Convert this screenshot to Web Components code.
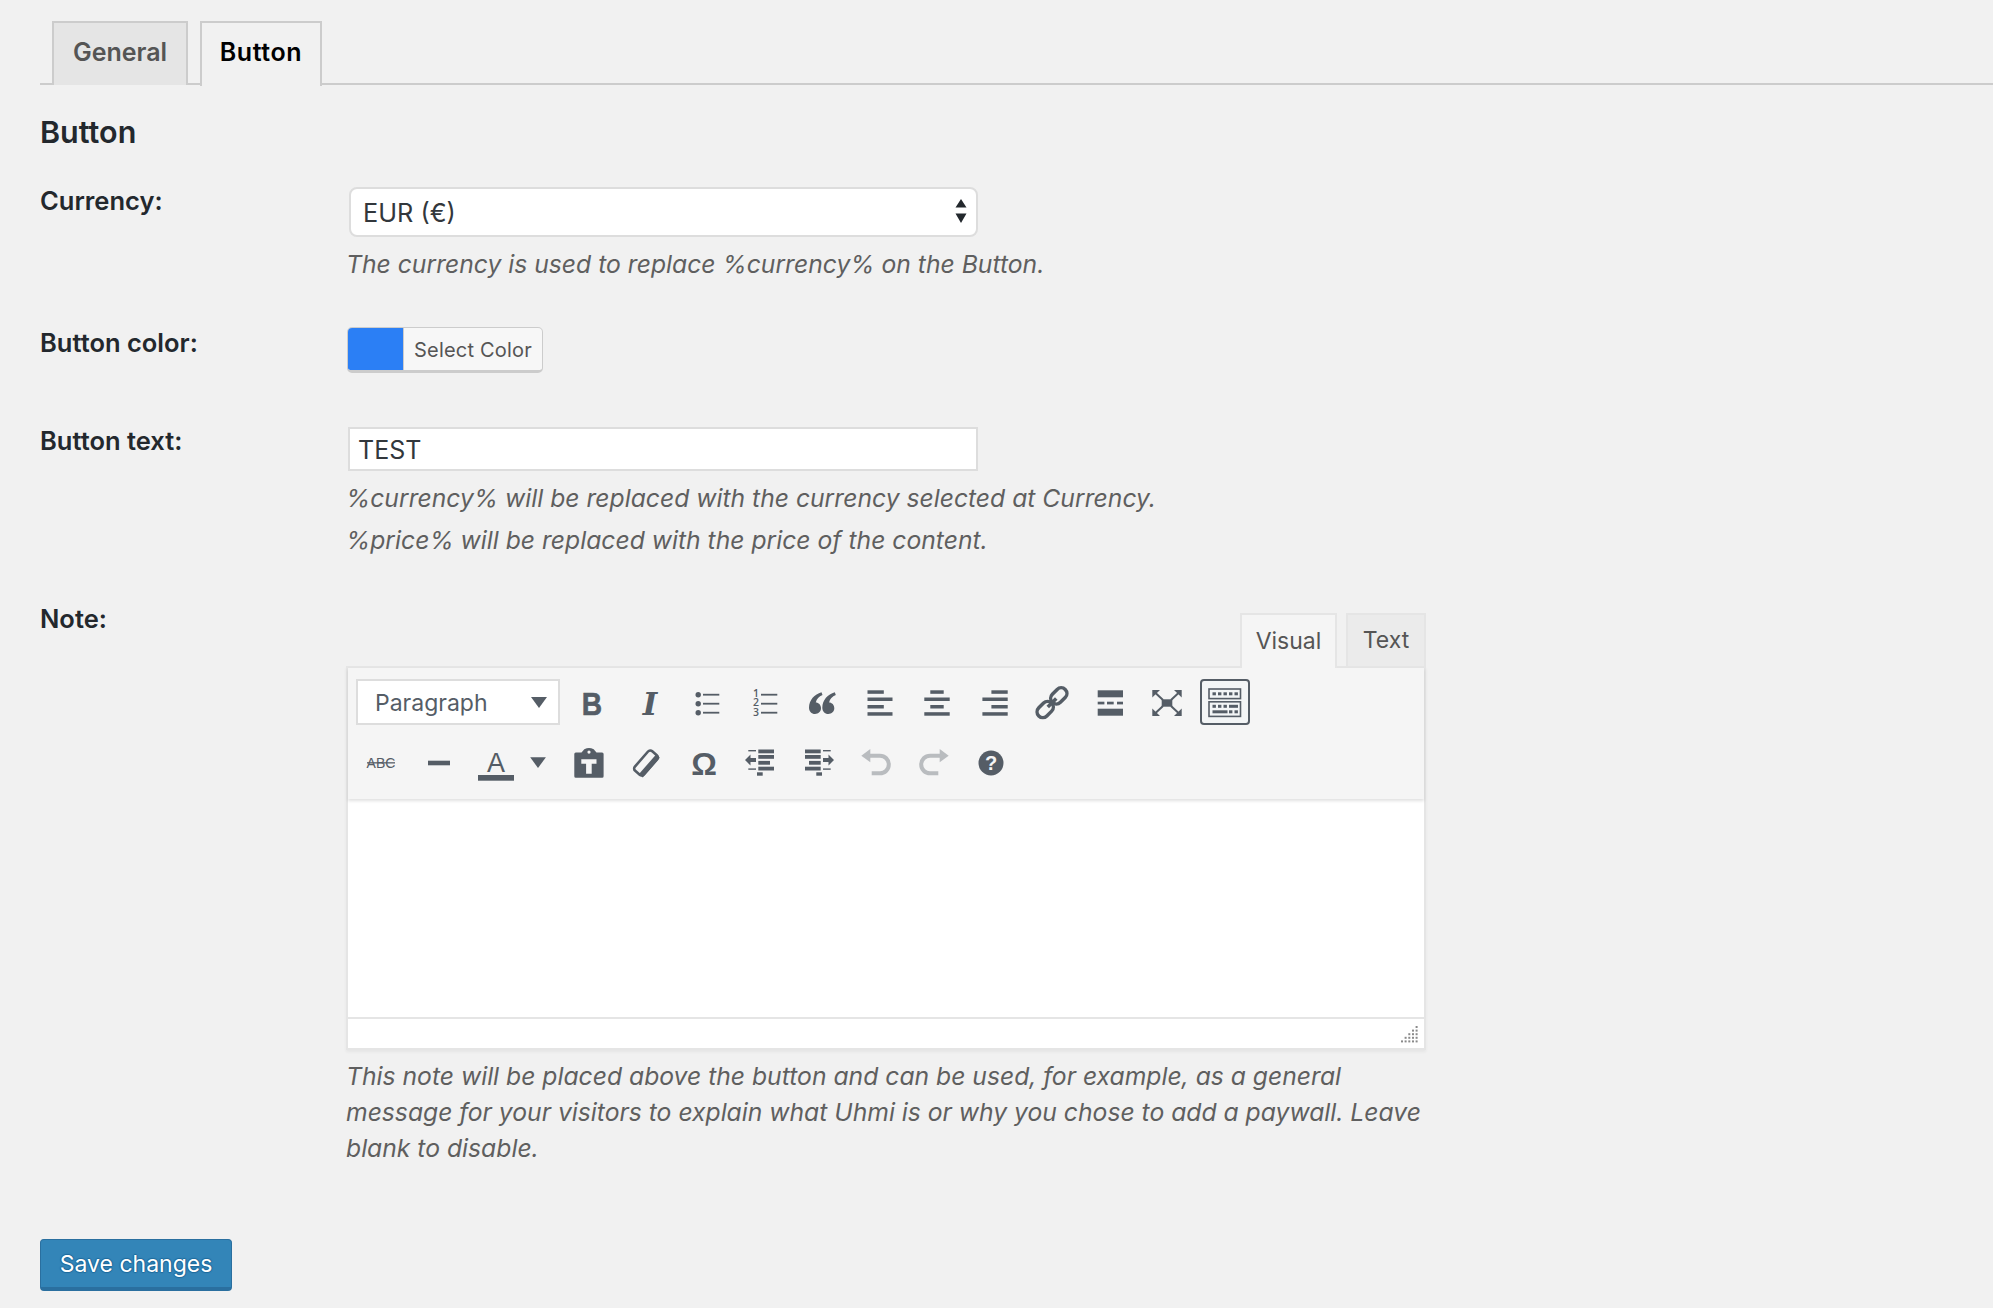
<!DOCTYPE html>
<html lang="en">
<head>
<meta charset="utf-8">
<title>Settings</title>
<style>
  html, body { margin: 0; padding: 0; background: #f1f1f1; }
  body { font: 24.7px/1.3 Inter, "Liberation Sans", sans-serif; color: #23282d; }
</style>
</head>
<body>
<settings-page>
  <nav-tabs>
    <nav-tab style="--w:136px">General</nav-tab>
    <nav-tab style="--w:122px" active>Button</nav-tab>
  </nav-tabs>
  <section-title>Button</section-title>

  <form-row style="--top:36px;--label-top:-1.5px">
    <span slot="label">Currency:</span>
    <select-box>EUR (€)</select-box>
    <field-desc style="--mt:12px">The currency is used to replace %currency% on the Button.</field-desc>
  </form-row>

  <form-row style="--top:48px;--label-top:1px">
    <span slot="label">Button color:</span>
    <color-button label="Select Color" value="#2b7ff5"></color-button>
  </form-row>

  <form-row style="--top:54px;--label-top:-1px">
    <span slot="label">Button text:</span>
    <text-field>TEST</text-field>
    <field-desc style="--mt:12px">%currency% will be replaced with the currency selected at Currency.</field-desc>
    <field-desc style="--mt:12px">%price% will be replaced with the price of the content.</field-desc>
  </form-row>

  <form-row style="--top:58px;--label-top:-9px">
    <span slot="label">Note:</span>
    <mce-editor></mce-editor>
    <field-desc style="--mt:8px;--lh:36px">This note will be placed above the button and can be used, for example, as a general<br>message for your visitors to explain what Uhmi is or why you chose to add a paywall. Leave<br>blank to disable.</field-desc>
  </form-row>

  <save-button>Save changes</save-button>
</settings-page>

<script>
"use strict"
const TXT = 'fill="currentColor" text-anchor="middle"';
const OUTDENT = `
  <rect x="4.3" y="4" width="7.7" height="1.4"/><rect x="14.3" y="3.5" width="15.7" height="3.8"/>
  <rect x="14.3" y="9" width="15.7" height="3.8"/><rect x="14.3" y="14.9" width="11.7" height="3.8"/>
  <rect x="14.3" y="20.7" width="15.7" height="3.8"/><rect x="4.3" y="22.4" width="7.7" height="1.4"/>
  <rect x="13" y="26.3" width="5.7" height="3.4"/>
  <path d="M1 14l5.5-5.500V12H12v4H6.500v3.500z"/>`;
const ICONS = {
  bold: `<g transform="translate(17 0) scale(.88 1)"><text x="0" y="28.5" ${TXT} font-family="Liberation Sans" font-weight="700" font-size="32" stroke="currentColor" stroke-width=".6">B</text></g>`,
  italic: `<text x="17" y="28.5" ${TXT} font-family="DejaVu Serif" font-style="italic" font-weight="700" font-size="31">I</text>`,
  ul: `<circle cx="8.2" cy="8.7" r="2.7"/><circle cx="8.2" cy="17.7" r="2.7"/><circle cx="8.2" cy="26.7" r="2.7"/>
       <rect x="13" y="7.8" width="16.3" height="1.8"/><rect x="13" y="16.8" width="16.3" height="1.8"/><rect x="13" y="25.8" width="16.3" height="1.8"/>`,
  ol: `<foreignObject x="3" y="3" width="10" height="30"><div xmlns="http://www.w3.org/1999/xhtml" style="font:600 10.5px/9.4px 'Open Sans',sans-serif;white-space:pre;text-align:center;color:#555d66">1
2
3</div></foreignObject>
       <rect x="13" y="7.8" width="16.3" height="1.8"/><rect x="13" y="16.8" width="16.3" height="1.8"/><rect x="13" y="25.8" width="16.3" height="1.8"/>`,
  quote: `<path d="M16.5 6.3C9.5 8.5 4 14 4 21.5 4 25.5 6.6 28 10 28c3.4 0 6-2.5 6-5.7 0-3.3-2.4-5.7-5.2-5.7.7-3.6 3.2-6.1 6.7-7.6z"/>
          <path d="M29.8 6.3C22.8 8.5 17.3 14 17.3 21.5c0 4 2.6 6.5 6 6.5 3.4 0 6-2.5 6-5.7 0-3.3-2.4-5.7-5.2-5.7.7-3.6 3.2-6.1 6.7-7.6z"/>`,
  alignleft: `<rect x="4.5" y="4.3" width="16.3" height="3.5"/><rect x="4.5" y="11.5" width="25" height="3.5"/><rect x="4.5" y="19" width="16.3" height="3.5"/><rect x="4.5" y="26.2" width="25" height="3.5"/>`,
  aligncenter: `<rect x="10.3" y="4.3" width="13.4" height="3.5"/><rect x="4.3" y="11.5" width="25.4" height="3.5"/><rect x="10.3" y="19" width="13.4" height="3.5"/><rect x="4.3" y="26.2" width="25.4" height="3.5"/>`,
  alignright: `<rect x="13.4" y="4.3" width="16.3" height="3.5"/><rect x="4.4" y="11.5" width="25.3" height="3.5"/><rect x="13.4" y="19" width="16.3" height="3.5"/><rect x="4.4" y="26.2" width="25.3" height="3.5"/>`,
  link: `<g transform="rotate(-45 17 16.7)" fill="none" stroke="currentColor" stroke-width="3.5">
           <rect x="17.5" y="11" width="18.2" height="11.4" rx="5.7"/>
           <rect x="-1.7" y="11" width="18.2" height="11.4" rx="5.7"/>
           <path d="M11 16.7h12"/></g>`,
  more: `<rect x="4.7" y="4.3" width="25.3" height="7"/><rect x="4.7" y="22.7" width="25.3" height="7"/>
         <rect x="4.7" y="15.7" width="6.7" height="2.7"/><rect x="14" y="15.7" width="6.7" height="2.7"/><rect x="24" y="15.7" width="6" height="2.7"/>`,
  fullscreen: `<rect x="11.7" y="13.3" width="10.6" height="7.4"/>
    <path d="M2.3 4h7.7L2.3 11.5zM31.7 4H24l7.7 7.5zM2.3 30H10L2.3 22.5zM31.7 30H24l7.7-7.5z"/>
    <path d="M5 6.5l8 7.5M29 6.5L21 14M5 27.5l8-7.5M29 27.5L21 20" stroke="currentColor" stroke-width="2" fill="none"/>`,
  kitchen: `<g fill="none" stroke="currentColor" stroke-width="1.6"><rect x="1" y="3" width="31.5" height="9.6"/><rect x="1" y="15.8" width="31.5" height="14.6"/></g>
    <rect x="4.5" y="6.3" width="3.4" height="3"/><rect x="10" y="6.3" width="3.4" height="3"/><rect x="15.5" y="6.3" width="3.4" height="3"/><rect x="21" y="6.3" width="3.4" height="3"/><rect x="26.5" y="6.3" width="3.4" height="3"/>
    <rect x="4.5" y="18.8" width="3.4" height="3"/><rect x="10" y="18.8" width="3.4" height="3"/><rect x="15.5" y="18.8" width="3.4" height="3"/><rect x="21" y="18.8" width="9" height="3"/>
    <rect x="4.5" y="24.3" width="15" height="3"/><rect x="21" y="24.3" width="3.4" height="3"/><rect x="26.5" y="24.3" width="3.4" height="3"/>`,
  strike: `<text x="17" y="22.3" ${TXT} font-family="Liberation Sans" font-size="14">ABC</text><rect x="3" y="16.2" width="28" height="1.3"/>`,
  hr: `<rect x="6" y="14.7" width="22" height="4.6"/>`,
  textcolor: `<text x="17" y="26.3" ${TXT} font-family="Liberation Sans" font-size="27">A</text><rect x="-1" y="29" width="36" height="5.7"/>`,
  caret: `<path d="M9.2 11.3h15.7L17 22z"/>`,
  paste: `<path fill-rule="evenodd" d="M3.8 6.5H9.5L12.3 3.3Q14.8 2 17 2T21.7 3.3L24.5 6.5H30.1Q31.6 6.5 31.6 8V30.2Q31.6 31.7 30.1 31.7H3.8Q2.3 31.7 2.3 30.2V8Q2.3 6.5 3.8 6.5ZM9.3 13.3V17.7H14.1V27.7H19.7V17.7H24.5V13.3ZM17 4.5A1.6 1.6 0 1 0 17 7.7 1.6 1.6 0 1 0 17 4.5Z"/>`,
  eraser: `<g transform="rotate(-49 17 17)"><rect x="4" y="11" width="26" height="12" rx="3" fill="none" stroke="currentColor" stroke-width="2.6"/><path d="M4 19h26v5H4z"/></g>`,
  omega: `<text x="17" y="28.7" ${TXT} font-family="Liberation Sans" font-weight="700" font-size="32">Ω</text>`,
  outdent: OUTDENT,
  indent: `<g transform="matrix(-1 0 0 1 33 0)">${OUTDENT}</g>`,
  undo: `<path d="M2.3 9.7L11.3 3v13.3z"/><path d="M10 9.7H21a8.8 8.8 0 0 1 0 17.600H12.7" fill="none" stroke="currentColor" stroke-width="4"/>`,
  redo: `<path d="M31.7 9.7L22.7 3v13.3z"/><path d="M24 9.7H13a8.8 8.8 0 0 0 0 17.600H21.3" fill="none" stroke="currentColor" stroke-width="4"/>`,
  help: `<circle cx="17" cy="17" r="12.5"/><text x="17" y="24" fill="#f5f5f5" text-anchor="middle" font-family="Liberation Sans" font-weight="700" font-size="20">?</text>`
};

class SettingsPage extends HTMLElement {
    constructor() {
        super();
        this._root = this.attachShadow({ mode: "open" });
    }
    connectedCallback() {
        this._root.innerHTML = `
        <style>
            :host { display: block; padding: 21px 0 0 40px; }
        </style>
        <slot></slot>`;
    }
}
customElements.define("settings-page", SettingsPage);

class NavTabs extends HTMLElement {
    constructor() {
        super();
        this._root = this.attachShadow({ mode: "open" });
    }
    connectedCallback() {
        this._root.innerHTML = `
        <style>
            :host { display: flex; gap: 12px; padding-left: 12px; height: 64px; box-sizing: border-box; border-bottom: 2.5px solid #ccc; }
        </style>
        <slot></slot>`;
    }
}
customElements.define("nav-tabs", NavTabs);

class NavTab extends HTMLElement {
    constructor() {
        super();
        this._root = this.attachShadow({ mode: "open" });
    }
    connectedCallback() {
        this._root.innerHTML = `
        <style>
            :host { display: flex; align-items: center; justify-content: center; box-sizing: border-box; width: var(--w); height: 64px; padding-bottom: 4px;
                border: 2.5px solid #ccc; border-bottom: 0; background: #e5e5e5; color: #555;
                font-size: 25px; font-weight: 600; }
            :host([active]) { background: #f1f1f1; color: #000; height: 65px; padding-bottom: 5px; letter-spacing: .6px; }
        </style>
        <slot></slot>`;
    }
}
customElements.define("nav-tab", NavTab);

class SectionTitle extends HTMLElement {
    constructor() {
        super();
        this._root = this.attachShadow({ mode: "open" });
    }
    connectedCallback() {
        this._root.innerHTML = `
        <style>
            :host { display: block; margin-top: 28px; height: 38px; line-height: 38px; font-size: 30.5px; font-weight: 600; color: #23282d; }
        </style>
        <slot></slot>`;
    }
}
customElements.define("section-title", SectionTitle);

class FormRow extends HTMLElement {
    constructor() {
        super();
        this._root = this.attachShadow({ mode: "open" });
    }
    connectedCallback() {
        this._root.innerHTML = `
        <style>
            :host { display: grid; grid-template-columns: 308px 1fr; margin-top: var(--top, 0); }
            .label { font-size: 25.5px; font-weight: 600; line-height: 30px; margin-top: var(--label-top, 0); color: #23282d; }
            .field { display: flex; flex-direction: column; align-items: flex-start; min-width: 0; }
        </style>
        <div class="label"><slot name="label"></slot></div>
        <div class="field"><slot></slot></div>`;
    }
}
customElements.define("form-row", FormRow);

class SelectBox extends HTMLElement {
    constructor() {
        super();
        this._root = this.attachShadow({ mode: "open" });
    }
    connectedCallback() {
        this._root.innerHTML = `
        <style>
            :host { display: flex; align-items: center; justify-content: space-between; box-sizing: border-box; width: 629px; height: 50px;
                margin-left: 1px; padding: 2px 8px 0 12px; background: #fff; border: 2.5px solid #ddd; border-radius: 8px;
                font-size: 25.3px; color: #32373c; }
            svg { display: block; margin-top: -2px; }
        </style>
        <slot></slot>
        <svg width="14" height="26" viewBox="0 0 14 26" fill="#23282d"><path d="M7 0l5.5 8.500h-11zM1.500 14.500h11L7 24z"/></svg>`;
    }
}
customElements.define("select-box", SelectBox);

class FieldDesc extends HTMLElement {
    constructor() {
        super();
        this._root = this.attachShadow({ mode: "open" });
    }
    connectedCallback() {
        this._root.innerHTML = `
        <style>
            :host { display: block; margin-top: var(--mt, 0); margin-left: -2px; line-height: var(--lh, 30px); font-size: 24.7px; font-style: italic; color: #5f5f5f; white-space: nowrap; }
        </style>
        <slot></slot>`;
    }
}
customElements.define("field-desc", FieldDesc);

class ColorButton extends HTMLElement {
    constructor() {
        super();
        this._root = this.attachShadow({ mode: "open" });
    }
    connectedCallback() {
        this._root.innerHTML = `
        <style>
            :host { display: flex; box-sizing: border-box; width: 196px; height: 46px; margin-left: -1px; overflow: hidden;
                border: 1.5px solid #ccc; border-bottom-width: 3px; border-radius: 5px; background: #f7f7f7; color: #555; font-size: 20px; }
            .swatch { width: 55px; background: ${this.getAttribute("value")}; flex: none; }
            .text { flex: 1; display: flex; align-items: center; justify-content: center; border-left: 1.5px solid #ccc; letter-spacing: .2px; padding-top: 1px; }
        </style>
        <div class="swatch"></div>
        <div class="text">${this.getAttribute("label")}</div>`;
    }
}
customElements.define("color-button", ColorButton);

class TextField extends HTMLElement {
    constructor() {
        super();
        this._root = this.attachShadow({ mode: "open" });
    }
    connectedCallback() {
        this._root.innerHTML = `
        <style>
            :host { display: flex; align-items: center; box-sizing: border-box; width: 630px; height: 44px; padding: 2px 8px 0;
                background: #fff; border: 2.5px solid #ddd; font-size: 25px; color: #32373c; }
        </style>
        <slot></slot>`;
    }
}
customElements.define("text-field", TextField);

class MceBtn extends HTMLElement {
    constructor() {
        super();
        this._root = this.attachShadow({ mode: "open" });
    }
    connectedCallback() {
        const icon = this.getAttribute("icon");
        this._root.innerHTML = `
        <style>
            :host { display: flex; align-items: center; justify-content: center; flex: none; width: 57.5px; height: 46px; color: #555d66; }
            :host([off]) { color: #b9bcbf; }
            :host([pressed]) { width: 50px; margin-left: 4px; box-sizing: border-box; border: 2.5px solid #555d66; border-radius: 4px; background: #f3f5f6; }
            :host([split]) { width: 27px; margin-right: 8px; }
            svg { display: block; overflow: visible; fill: currentColor; flex: none; margin-top: 2px; }
        </style>
        <svg width="34" height="34" viewBox="0 0 34 34">${ICONS[icon]}</svg>`;
    }
}
customElements.define("mce-btn", MceBtn);

class MceEditor extends HTMLElement {
    constructor() {
        super();
        this._root = this.attachShadow({ mode: "open" });
    }
    connectedCallback() {
        const row1 = ["bold","italic","ul","ol","quote","alignleft","aligncenter","alignright","link","more","fullscreen"];
        const row2 = ["strike","hr","textcolor"];
        const row3 = ["paste","eraser","omega","outdent","indent"];
        const btns = list => list.map(i => `<mce-btn icon="${i}"></mce-btn>`).join("");
        this._root.innerHTML = `
        <style>
            :host { display: block; width: 1080px; margin-left: -2px; font-size: 23px; }
            .tabs { display: flex; justify-content: flex-end; gap: 9px; height: 53px; position: relative; z-index: 1; }
            .tab { box-sizing: border-box; display: flex; align-items: center; justify-content: center; height: 55px; border: 2px solid #e5e5e5; border-bottom: 0; color: #555; background: #ebebeb; }
            .tab.on { width: 97px; background: #f5f5f5; }
            .tab.txt { width: 80px; height: 53px; padding-top: 1px; }
            .wrap { border: 2px solid #e5e5e5; box-shadow: 0 2px 3px rgba(0,0,0,.05); background: #fff; }
            .bar { box-sizing: border-box; height: 131px; padding: 11px 0 0 8px; background: #f5f5f5; box-shadow: 0 2px 3px rgba(0,0,0,.12); position: relative; }
            .row { display: flex; align-items: center; height: 46px; }
            .row + .row { margin: 14px 0 0 -3.75px; }
            .fmt { box-sizing: border-box; display: flex; align-items: center; justify-content: space-between; width: 204px; height: 46px; margin-right: 3.25px;
                padding: 3px 11px 0 17px; background: #fff; border: 2.5px solid #ddd; color: #555d66; flex: none; }
            .fmt svg { margin-top: -2px; }
            .area { height: 218px; }
            .status { box-sizing: border-box; height: 31px; border-top: 2.5px solid #e5e5e5; display: flex; justify-content: flex-end; align-items: flex-end; padding: 0 6px 5px 0; }
            svg.grip { display: block; }
        </style>
        <div class="tabs">
            <div class="tab on">Visual</div>
            <div class="tab txt">Text</div>
        </div>
        <div class="wrap">
            <div class="bar">
                <div class="row">
                    <div class="fmt">Paragraph<svg width="16" height="11" viewBox="0 0 16 11" fill="#555d66"><path d="M0 0h16L8 11z"/></svg></div>
                    ${btns(row1)}
                    <mce-btn icon="kitchen" pressed></mce-btn>
                </div>
                <div class="row">
                    ${btns(row2)}
                    <mce-btn icon="caret" split></mce-btn>
                    ${btns(row3)}
                    <mce-btn icon="undo" off></mce-btn>
                    <mce-btn icon="redo" off></mce-btn>
                    <mce-btn icon="help"></mce-btn>
                </div>
            </div>
            <div class="area"></div>
            <div class="status">
                <svg class="grip" width="17" height="17" viewBox="0 0 17 17" fill="#8a8a8a">
                    <rect x="14.6" y="0" width="2" height="2"/><rect x="11" y="3.6" width="2" height="2"/><rect x="14.6" y="3.6" width="2" height="2"/>
                    <rect x="7.3" y="7.2" width="2" height="2"/><rect x="11" y="7.2" width="2" height="2"/><rect x="14.6" y="7.2" width="2" height="2"/>
                    <rect x="3.6" y="10.8" width="2" height="2"/><rect x="7.3" y="10.8" width="2" height="2"/><rect x="11" y="10.8" width="2" height="2"/><rect x="14.6" y="10.8" width="2" height="2"/>
                    <rect x="0" y="14.4" width="2" height="2"/><rect x="3.6" y="14.4" width="2" height="2"/><rect x="7.3" y="14.4" width="2" height="2"/><rect x="11" y="14.4" width="2" height="2"/><rect x="14.6" y="14.4" width="2" height="2"/>
                </svg>
            </div>
        </div>`;
    }
}
customElements.define("mce-editor", MceEditor);

class SaveButton extends HTMLElement {
    constructor() {
        super();
        this._root = this.attachShadow({ mode: "open" });
    }
    connectedCallback() {
        this._root.innerHTML = `
        <style>
            :host { display: flex; align-items: center; justify-content: center; box-sizing: border-box; width: 192px; height: 52px; margin: 73px 0 0 0; padding-top: 2px;
                background: #3385b8; border: 1.5px solid #2a6f9f; border-bottom-width: 4px; border-radius: 4px;
                color: #fff; font-size: 23px; text-shadow: 0 -1px 1px #1e6a9c, 1px 0 1px #1e6a9c, 0 1px 1px #1e6a9c, -1px 0 1px #1e6a9c; }
        </style>
        <slot></slot>`;
    }
}
customElements.define("save-button", SaveButton);
</script>
</body>
</html>
